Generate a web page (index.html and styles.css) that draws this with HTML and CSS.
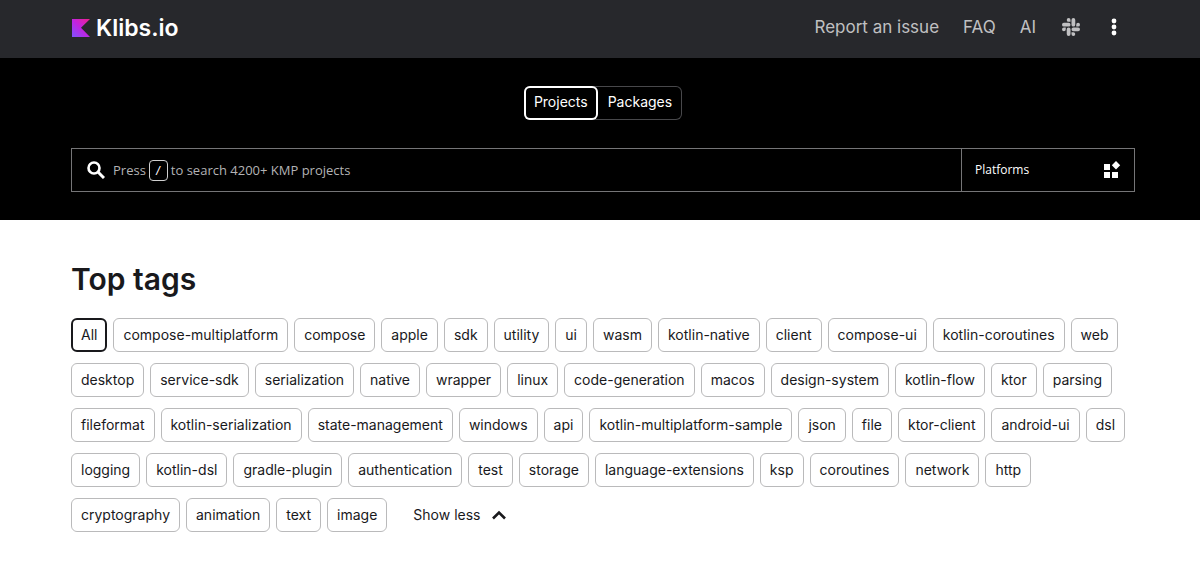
FILE: index.html
```html
<!DOCTYPE html>
<html lang="en">
<head>
    <meta charset="UTF-8">
    <meta name="viewport" content="width=device-width, initial-scale=1.0">
    <title>Klibs.io</title>
    <link rel="stylesheet" href="styles.css">
</head>
<body>
    <header class="header">
        <div class="container header-row">
            <a class="logo" href="#">
                <svg class="logo-mark" viewBox="0 0 18 18" aria-hidden="true">
                    <defs>
                        <linearGradient id="kotlin" x1="1" y1="0" x2="0" y2="1">
                            <stop offset="0" stop-color="#f0208c"/>
                            <stop offset="0.5" stop-color="#c123e0"/>
                            <stop offset="1" stop-color="#7f52ff"/>
                        </linearGradient>
                    </defs>
                    <path d="M0 0h18L9 8.800l9 9.200H0z" fill="url(#kotlin)"/>
                </svg>
                <span>Klibs.io</span>
            </a>
            <nav class="nav">
                <a href="#">Report an issue</a>
                <a href="#">FAQ</a>
                <a href="#">AI</a>
                <a class="slack" href="#" aria-label="Slack">
                    <svg viewBox="0 0 24 24" width="18" height="18" fill="currentColor" aria-hidden="true">
                        <path d="M5.042 15.165a2.528 2.528 0 0 1-2.520 2.523A2.528 2.528 0 0 1 0 15.165a2.527 2.527 0 0 1 2.522-2.520h2.520v2.520zM6.313 15.165a2.527 2.527 0 0 1 2.521-2.520 2.527 2.527 0 0 1 2.521 2.520v6.313A2.528 2.528 0 0 1 8.834 24a2.528 2.528 0 0 1-2.521-2.522v-6.313zM8.834 5.042a2.528 2.528 0 0 1-2.521-2.520A2.528 2.528 0 0 1 8.834 0a2.528 2.528 0 0 1 2.521 2.522v2.520H8.834zM8.834 6.313a2.528 2.528 0 0 1 2.521 2.521 2.528 2.528 0 0 1-2.521 2.521H2.522A2.528 2.528 0 0 1 0 8.834a2.528 2.528 0 0 1 2.522-2.521h6.312zM18.956 8.834a2.528 2.528 0 0 1 2.522-2.521A2.528 2.528 0 0 1 24 8.834a2.528 2.528 0 0 1-2.522 2.521h-2.522V8.834zM17.688 8.834a2.528 2.528 0 0 1-2.523 2.521 2.527 2.527 0 0 1-2.520-2.521V2.522A2.527 2.527 0 0 1 15.165 0a2.528 2.528 0 0 1 2.523 2.522v6.312zM15.165 18.956a2.528 2.528 0 0 1 2.523 2.522A2.528 2.528 0 0 1 15.165 24a2.527 2.527 0 0 1-2.520-2.522v-2.522h2.520zM15.165 17.688a2.527 2.527 0 0 1-2.520-2.523 2.526 2.526 0 0 1 2.520-2.520h6.313A2.527 2.527 0 0 1 24 15.165a2.528 2.528 0 0 1-2.522 2.523h-6.313z"/>
                    </svg>
                </a>
                <button class="more" type="button" aria-label="More">
                    <svg viewBox="0 0 6 18" width="6" height="18" fill="currentColor" aria-hidden="true">
                        <circle cx="3" cy="3" r="2.400"/>
                        <circle cx="3" cy="9" r="2.400"/>
                        <circle cx="3" cy="15" r="2.400"/>
                    </svg>
                </button>
            </nav>
        </div>
    </header>

    <section class="hero">
        <div class="container">
            <div class="switcher">
                <button class="switch active" type="button">Projects</button>
                <button class="switch" type="button">Packages</button>
            </div>
            <form class="search">
                <div class="search-field">
                    <input id="query" type="text" autocomplete="off">
                    <label class="hint" for="query">
                        <svg viewBox="0 0 18 18" width="18" height="18" fill="none" stroke="#fff" aria-hidden="true">
                            <circle cx="7" cy="7" r="5.500" stroke-width="2.600"/>
                            <path d="M11 11l6 6" stroke-width="3"/>
                        </svg>
                        <span>Press</span>
                        <kbd>/</kbd>
                        <span>to search 4200+ KMP projects</span>
                    </label>
                </div>
                <button class="platforms" type="button">
                    <span>Platforms</span>
                    <svg viewBox="0 0 18 18" width="18" height="18" fill="currentColor" aria-hidden="true">
                        <path d="M1 3h6v6H1zM1 11h6v6H1zM9 11h6v6H9zM13 0l4.200 4.200L13 8.400 8.800 4.200z"/>
                    </svg>
                </button>
            </form>
        </div>
    </section>

    <main class="container main">
        <h1>Top tags</h1>
        <div class="tags">
            <button class="tag active" type="button">All</button>
            <button class="tag" type="button">compose-multiplatform</button>
            <button class="tag" type="button">compose</button>
            <button class="tag" type="button">apple</button>
            <button class="tag" type="button">sdk</button>
            <button class="tag" type="button">utility</button>
            <button class="tag" type="button">ui</button>
            <button class="tag" type="button">wasm</button>
            <button class="tag" type="button">kotlin-native</button>
            <button class="tag" type="button">client</button>
            <button class="tag" type="button">compose-ui</button>
            <button class="tag" type="button">kotlin-coroutines</button>
            <button class="tag" type="button">web</button>
            <button class="tag" type="button">desktop</button>
            <button class="tag" type="button">service-sdk</button>
            <button class="tag" type="button">serialization</button>
            <button class="tag" type="button">native</button>
            <button class="tag" type="button">wrapper</button>
            <button class="tag" type="button">linux</button>
            <button class="tag" type="button">code-generation</button>
            <button class="tag" type="button">macos</button>
            <button class="tag" type="button">design-system</button>
            <button class="tag" type="button">kotlin-flow</button>
            <button class="tag" type="button">ktor</button>
            <button class="tag" type="button">parsing</button>
            <button class="tag" type="button">fileformat</button>
            <button class="tag" type="button">kotlin-serialization</button>
            <button class="tag" type="button">state-management</button>
            <button class="tag" type="button">windows</button>
            <button class="tag" type="button">api</button>
            <button class="tag" type="button">kotlin-multiplatform-sample</button>
            <button class="tag" type="button">json</button>
            <button class="tag" type="button">file</button>
            <button class="tag" type="button">ktor-client</button>
            <button class="tag" type="button">android-ui</button>
            <button class="tag" type="button">dsl</button>
            <button class="tag" type="button">logging</button>
            <button class="tag" type="button">kotlin-dsl</button>
            <button class="tag" type="button">gradle-plugin</button>
            <button class="tag" type="button">authentication</button>
            <button class="tag" type="button">test</button>
            <button class="tag" type="button">storage</button>
            <button class="tag" type="button">language-extensions</button>
            <button class="tag" type="button">ksp</button>
            <button class="tag" type="button">coroutines</button>
            <button class="tag" type="button">network</button>
            <button class="tag" type="button">http</button>
            <button class="tag" type="button">cryptography</button>
            <button class="tag" type="button">animation</button>
            <button class="tag" type="button">text</button>
            <button class="tag" type="button">image</button>
            <button class="show-less" type="button">
                <span>Show less</span>
                <svg viewBox="0 0 14 10" width="14" height="10" fill="none" stroke="currentColor" stroke-width="2.600" aria-hidden="true">
                    <path d="M1 8.500l6-6 6 6"/>
                </svg>
            </button>
        </div>
    </main>
</body>
</html>
```
FILE: styles.css
```css
* {
    margin: 0;
    padding: 0;
    box-sizing: border-box;
}

body {
    font-family: Inter, 'Liberation Sans', sans-serif;
    font-size: 14px;
    line-height: 20px;
    color: #19191c;
    background: #fff;
}

button,
input {
    font: inherit;
    color: inherit;
    background: none;
    border: none;
}

button {
    cursor: pointer;
}

a {
    color: inherit;
    text-decoration: none;
}

svg {
    display: block;
}

.container {
    padding: 0 65px 0 71px;
}

/* header */
.header {
    background: #27282c;
    color: #c0c0c2;
}

.header-row {
    display: flex;
    align-items: center;
    justify-content: space-between;
    height: 58px;
}

.logo {
    display: flex;
    align-items: center;
    gap: 6px;
    padding-bottom: 2px;
    color: #fff;
    font-size: 23px;
    line-height: 28px;
    font-weight: 600;
}

.logo-mark {
    width: 18px;
    height: 18px;
    margin-left: 1px;
}

.nav {
    display: flex;
    align-items: center;
    gap: 24px;
    padding-right: 18px;
    padding-bottom: 4px;
    font-size: 17px;
    line-height: 24px;
}

.slack {
    margin-left: 2px;
}

.more {
    color: #fff;
    margin-left: 7px;
}

/* search block */
.hero {
    background: #000;
    color: #fff;
    padding: 28px 0;
}

.switcher {
    display: flex;
    width: fit-content;
    margin: 0 auto 28px;
    border-radius: 6px;
    box-shadow: inset 0 0 0 1px #48484b;
}

.switch {
    height: 34px;
    padding: 0 10px 2px;
    border-radius: 6px;
}

.switch.active {
    box-shadow: inset 0 0 0 2px #fff;
}

.search {
    display: flex;
    border: 1px solid #757577;
    font-family: 'Open Sans', 'Noto Sans', sans-serif;
    font-size: 13px;
}

.search-field {
    position: relative;
    flex: 1;
}

.search-field input {
    display: block;
    width: 100%;
    height: 42px;
    padding: 0 40px;
    outline: none;
}

.hint {
    position: absolute;
    inset: 0;
    display: flex;
    align-items: center;
    gap: 3px;
    padding-left: 15px;
    color: #b3b3b5;
    cursor: text;
}

.hint svg {
    margin-right: 5px;
}

.hint kbd {
    width: 19px;
    height: 21px;
    border: 1px solid #d0d0d0;
    border-radius: 4px;
    color: #fff;
    font-family: 'DejaVu Sans Mono', monospace;
    font-size: 11px;
    line-height: 19px;
    text-align: center;
}

.platforms {
    display: flex;
    align-items: center;
    justify-content: space-between;
    width: 173px;
    padding: 0 13px;
    border-left: 1px solid #757577;
    font-size: 12px;
}

/* tags */
.main {
    padding-top: 39px;
    padding-bottom: 40px;
}

h1 {
    margin-bottom: 19px;
    font-size: 30px;
    line-height: 40px;
    font-weight: 600;
}

.tags {
    display: flex;
    flex-wrap: wrap;
    gap: 11px 6px;
}

.tag {
    height: 34px;
    padding: 0 9px;
    border: 1px solid #bababb;
    border-radius: 6px;
}

.tag.active {
    padding: 0 8px;
    border: 2px solid #19191c;
}

.show-less {
    display: flex;
    align-items: center;
    gap: 11px;
    height: 34px;
    margin-left: 20px;
}
```
